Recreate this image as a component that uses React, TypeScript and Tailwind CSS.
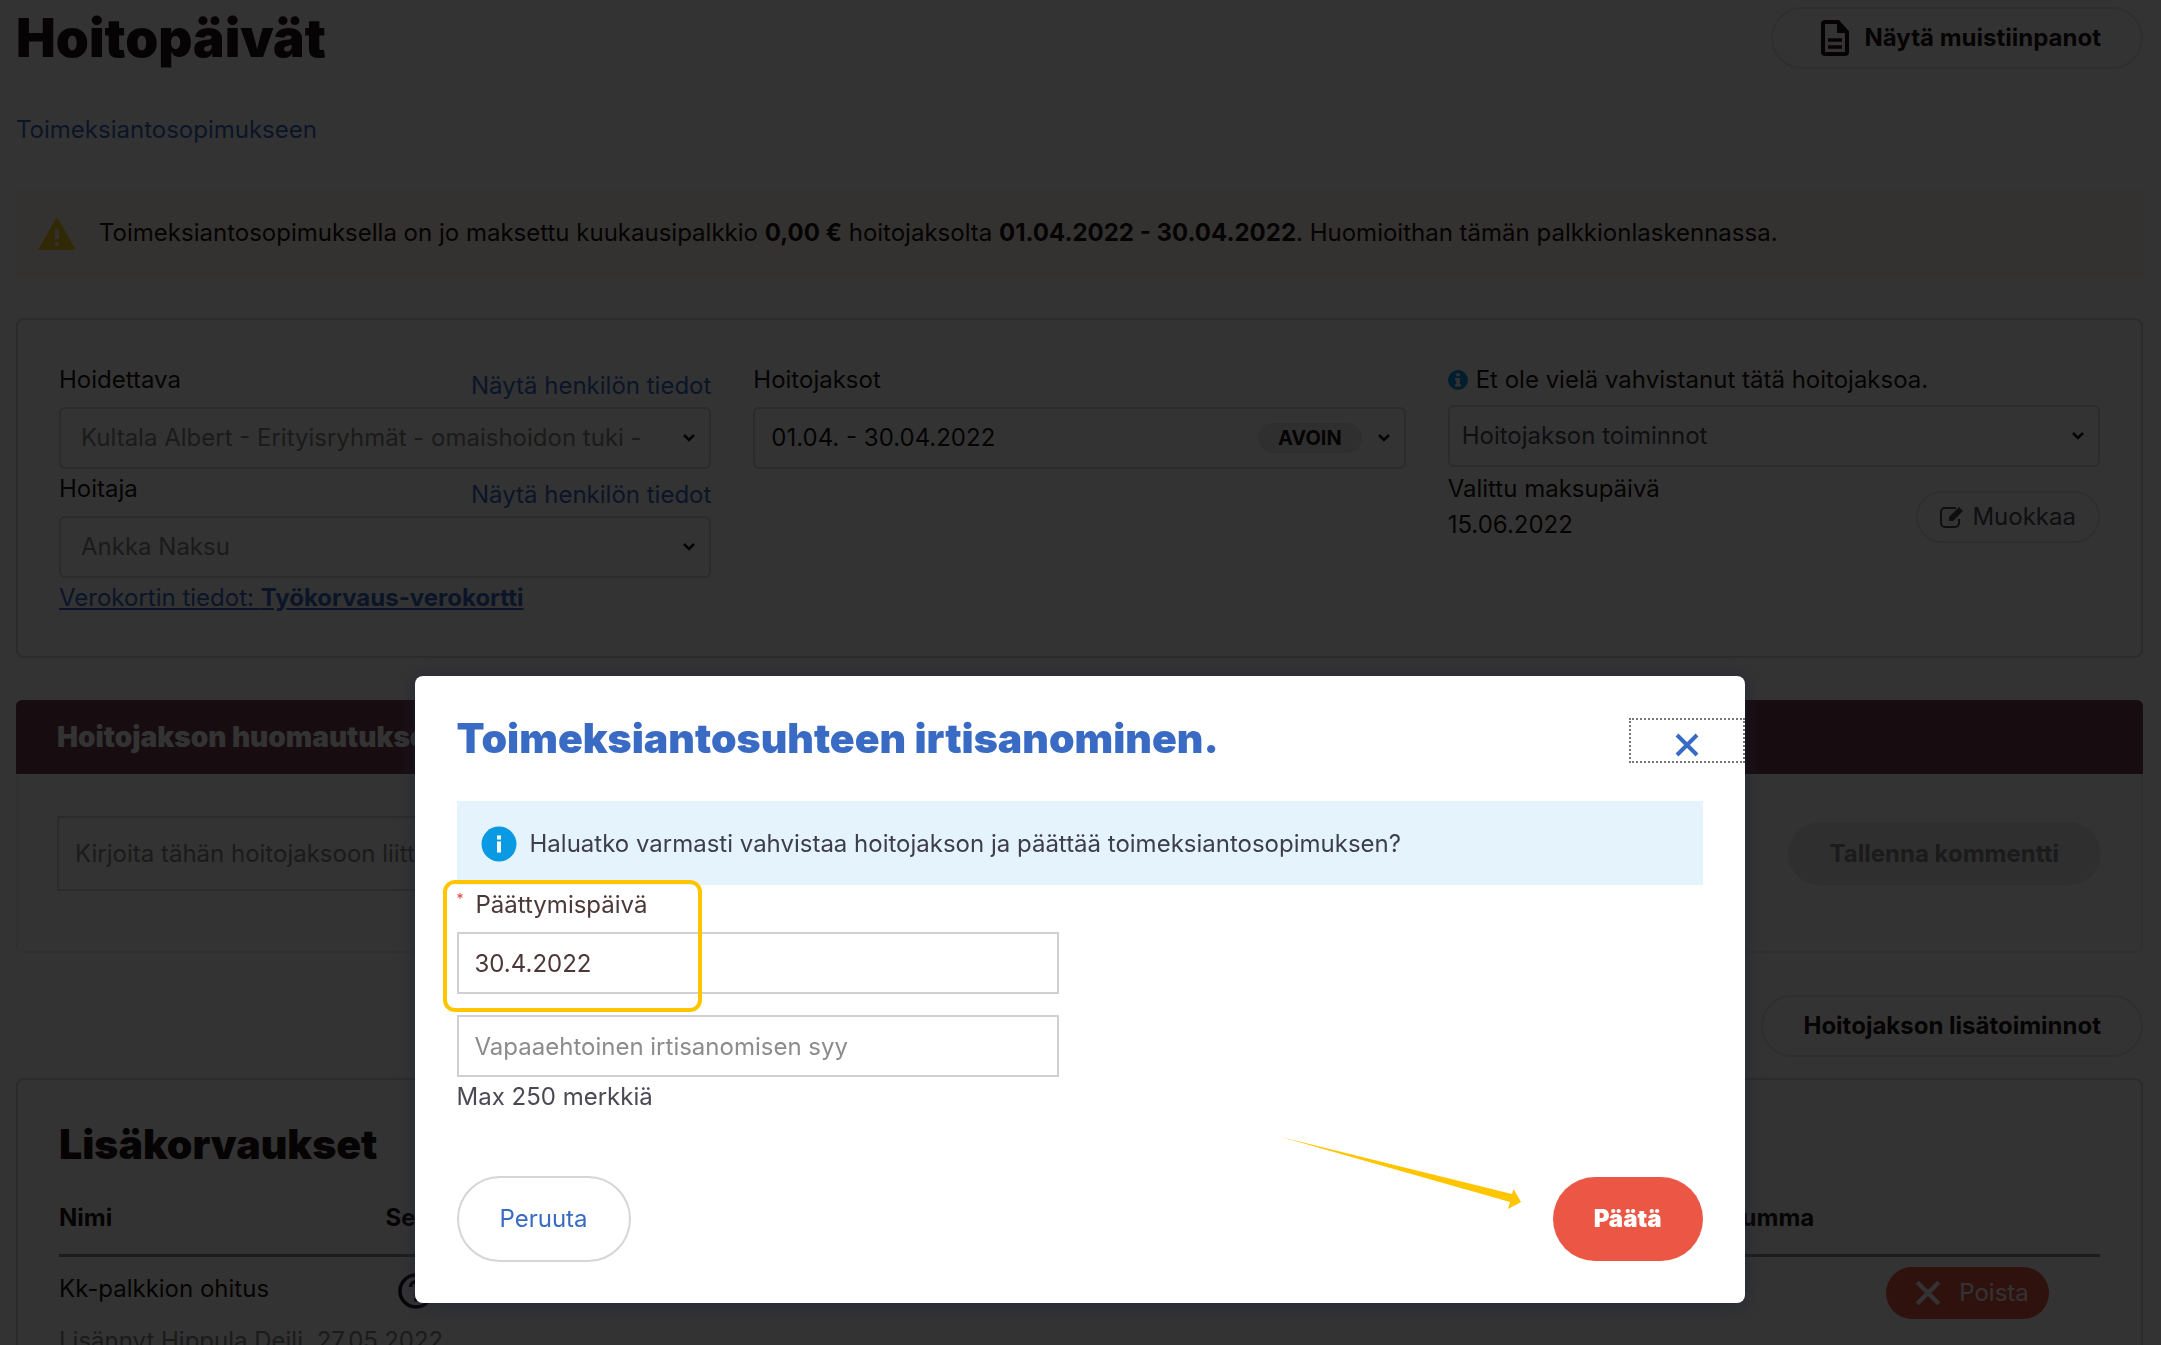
import { useState } from 'react';
import type { ReactNode } from 'react';

const cardClass = 'border-2 border-[#d6d6d6] rounded-lg bg-white';
const pillClass = 'flex items-center rounded-full border-2 border-[#e6e6e6] font-bold';

const Chevron = () => (
  <svg viewBox="0 0 12 8" className="w-3 h-2" fill="none" stroke="#1c1212" strokeWidth="2.6">
    <path d="M1 1l5 5 5-5" />
  </svg>
);

interface SelectBoxProps {
  id: string;
  label?: string;
  value: string;
  className?: string;
  badge?: string;
}

const SelectBox = ({ id, label, value, className = '', badge }: SelectBoxProps) => (
  <div className="relative">
    <select
      id={id}
      aria-label={label}
      className={`block w-full h-[62px] appearance-none rounded-md border-2 border-[#d6d6d6] bg-white pr-14 outline-none ${className}`}
    >
      <option>{value}</option>
    </select>
    <div className="absolute inset-y-0 right-4 flex items-center gap-4 pointer-events-none">
      {badge && (
        <span className="rounded-full bg-[#ececec] px-5 text-xl leading-[30px] font-bold">{badge}</span>
      )}
      <Chevron />
    </div>
  </div>
);

const LabelRow = ({ htmlFor, children }: { htmlFor: string; children: ReactNode }) => (
  <div className="flex items-start justify-between h-[43px]">
    <label htmlFor={htmlFor} className="leading-8">{children}</label>
    <a href="#henkilo" className="pt-1 leading-9 text-[#3a6bc4]">Näytä henkilön tiedot</a>
  </div>
);

const CloseIcon = ({ className }: { className: string }) => (
  <svg viewBox="0 0 24 24" className={className} fill="none" stroke="currentColor" strokeWidth="4">
    <path d="M2 2l20 20M22 2L2 22" />
  </svg>
);

const PageHeader = () => (
  <header>
    <div className="flex items-start justify-between">
      <h1 className="pt-2 text-[53px] leading-[60px] font-black">Hoitopäivät</h1>
      <button className={`${pillClass} mt-[7px] h-[62px] pl-12 pr-10 gap-4`}>
        <svg viewBox="0 0 28 36" className="w-7 h-9" fill="none" stroke="currentColor" strokeWidth="4">
          <path d="M4 2h13l9 10v20a2 2 0 0 1-2 2H4a2 2 0 0 1-2-2V4a2 2 0 0 1 2-2z" />
          <path d="M16 2v11h11z" fill="currentColor" stroke="none" />
          <path d="M7 20h14M7 27h14" strokeWidth="3.4" />
        </svg>
        Näytä muistiinpanot
      </button>
    </div>
    <a href="#sopimus" className="mt-[43px] block leading-9 text-[#3a6bc4]">Toimeksiantosopimukseen</a>
  </header>
);

const Warning = () => (
  <div className="mt-[41px] flex h-[88px] items-center bg-[#fdf8ee] pl-[22px] rounded-sm">
    <svg viewBox="0 0 38 33" className="w-[38px] h-[33px] mr-[23px]">
      <path d="M19 0l19 33H0z" fill="#f2cc1c" />
      <path d="M17 12h4v10h-4zM17 25h4v4h-4z" fill="#fdf6e8" />
    </svg>
    <p>
      Toimeksiantosopimuksella on jo maksettu kuukausipalkkio <b className="font-bold">0,00 €</b> hoitojaksolta{' '}
      <b className="font-bold">01.04.2022 - 30.04.2022</b>. Huomioithan tämän palkkionlaskennassa.
    </p>
  </div>
);

const Details = () => (
  <section className={`${cardClass} mt-[41px] grid h-[340px] grid-cols-3 gap-[42px] px-[41px] pt-11`}>
    <div>
      <LabelRow htmlFor="hoidettava">Hoidettava</LabelRow>
      <SelectBox id="hoidettava" value="Kultala Albert - Erityisryhmät - omaishoidon tuki -" className="pl-5 text-[#858585]" />
      <div className="pt-1">
        <LabelRow htmlFor="hoitaja">Hoitaja</LabelRow>
      </div>
      <SelectBox id="hoitaja" value="Ankka Naksu" className="pl-5 text-[#858585]" />
      <a href="#verokortti" className="inline-block leading-10 text-[#3a6bc4] underline">
        Verokortin tiedot: <b className="font-bold">Työkorvaus-verokortti</b>
      </a>
    </div>
    <div>
      <label htmlFor="jaksot" className="block h-[43px] leading-8">Hoitojaksot</label>
      <SelectBox id="jaksot" value="01.04. - 30.04.2022" className="pl-4" badge="AVOIN" />
    </div>
    <div>
      <p className="flex h-[41px] items-start gap-2 leading-8">
        <svg viewBox="0 0 20 20" className="mt-[6px] w-5 h-5">
          <circle cx="10" cy="10" r="10" fill="#0a91d6" />
          <path d="M8.2 3.2h3.6v3H8.2zM7 8h4.8v6.2H13v2.2H7v-2.2h1.3v-4H7z" fill="#fff" />
        </svg>
        Et ole vielä vahvistanut tätä hoitojaksoa.
      </p>
      <SelectBox id="toiminnot" label="Hoitojakson toiminnot" value="Hoitojakson toiminnot" className="pl-3 text-[#4a4a55]" />
      <div className="flex justify-between pt-1">
        <div className="leading-9">
          <p>Valittu maksupäivä</p>
          <p>15.06.2022</p>
        </div>
        <button className="mt-5 flex h-[52px] items-center gap-2 rounded-full border-2 border-[#e6e6e6] px-[22px] text-[#4a4a55]">
          <svg viewBox="0 0 24 22" className="w-6 h-[22px]" fill="none" stroke="currentColor" strokeWidth="2">
            <path d="M16 2H5a4 4 0 0 0-4 4v11a4 4 0 0 0 4 4h10a4 4 0 0 0 4-4v-4" />
            <path d="M9 11L19 1l4 4-10 10H9z" fill="currentColor" stroke="none" />
          </svg>
          Muokkaa
        </button>
      </div>
    </div>
  </section>
);

const Comments = () => (
  <section className="mt-[42px] overflow-hidden rounded-md">
    <h2 className="bg-[#733c50] pl-[41px] text-[28px] leading-[74px] font-black text-white">
      Hoitojakson huomautukset
    </h2>
    <div className="flex h-[179px] items-start gap-20 rounded-b-md border-2 border-t-0 border-[#eeeeee] pl-[39px] pr-10 pt-[42px]">
      <input
        aria-label="Kommentti"
        placeholder="Kirjoita tähän hoitojaksoon liittyvä kommentti"
        className="h-[75px] flex-1 border-2 border-[#d6d6d6] px-4 outline-none placeholder:text-[#858585]"
      />
      <button className="mt-[6px] h-[63px] rounded-full bg-[#ececec] px-[42px] font-bold text-[#858585]">
        Tallenna kommentti
      </button>
    </div>
  </section>
);

const Compensations = () => (
  <section className={`${cardClass} mt-[21px] min-h-[340px] px-[41px] pt-[34px]`}>
    <h2 className="text-[41px] leading-[60px] font-black">Lisäkorvaukset</h2>
    <table className="mt-2 w-full text-left">
      <thead>
        <tr className="h-[73px] border-b-[3px] border-[#8a8a8a]">
          <th className="w-[16%] font-bold">Nimi</th>
          <th className="w-[30%] font-bold">Selite</th>
          <th className="w-[40%] text-right font-bold">Summa</th>
          <th className="w-[14%]" />
        </tr>
      </thead>
      <tbody>
        <tr className="h-[70px]">
          <td className="pb-1">Kk-palkkion ohitus</td>
          <td className="pl-3">
            <svg viewBox="0 0 36 36" className="w-9 h-9" fill="none" stroke="currentColor" strokeWidth="3.5">
              <circle cx="18" cy="18" r="16" />
              <path d="M12.500 14a5.500 5.500 0 1 1 8 5c-1.800 1-2.500 1.600-2.500 3.500M18 25v3.500" />
            </svg>
          </td>
          <td />
          <td className="pl-[72px] pt-1">
            <button className="flex h-[52px] items-center gap-[18px] rounded-full bg-[#ec5745] pl-[29px] pr-5 text-white">
              <CloseIcon className="w-[26px] h-[26px]" />
              Poista
            </button>
          </td>
        </tr>
        <tr>
          <td colSpan={4} className="text-[#858585]">Lisännyt Hippula Deili, 27.05.2022</td>
        </tr>
      </tbody>
    </table>
  </section>
);

const TerminationModal = ({ onClose }: { onClose: () => void }) => (
  <div className="fixed inset-0 z-50 flex items-end justify-center bg-black/80 pb-[42px] pr-[2px]">
    <div
      role="dialog"
      aria-labelledby="modal-title"
      className="relative w-full max-w-[1330px] rounded-lg bg-white px-[42px] pt-[30px] pb-[41px] shadow-[0_2px_20px_rgba(30,34,56,0.6)]"
    >
      <div className="-mr-[42px] flex items-start justify-between">
        <h2 id="modal-title" className="text-[41px] leading-[64px] font-black text-[#3a6bc4]">
          Toimeksiantosuhteen irtisanominen.
        </h2>
        <button
          aria-label="Sulje"
          onClick={onClose}
          className="mt-3 flex h-[45px] w-[116px] items-end justify-center border-2 border-dotted border-[#777] pb-1 text-[#3a6bc4]"
        >
          <CloseIcon className="w-6 h-6" />
        </button>
      </div>

      <div className="mt-[31px] flex h-[84px] items-center gap-[13px] bg-[#e5f4fc] pl-6 pt-[2px] text-[#3d3d4d]">
        <svg viewBox="0 0 36 36" className="w-9 h-9">
          <circle cx="18" cy="18" r="17.500" fill="#0a9ae3" />
          <path d="M16 9.500h4v4h-4zM16 15.500h4v11h-4z" fill="#fff" />
        </svg>
        Haluatko varmasti vahvistaa hoitojakson ja päättää toimeksiantosopimuksen?
      </div>

      <div className="relative flex h-[47px] text-[#4d3838]">
        <span className="w-[19px] pt-1 text-sm text-[#e53935]">*</span>
        <label htmlFor="paiva" className="leading-10">Päättymispäivä</label>
        {/* Korostus päivämäärän ympärillä */}
        <div className="absolute -left-[14px] -top-[5px] h-[132px] w-[259px] rounded-xl border-4 border-[#ffc600] pointer-events-none" />
      </div>
      <input
        id="paiva"
        defaultValue="30.4.2022"
        className="block h-[62px] w-[602px] border-2 border-[#d0d0d0] px-4 text-[#4d3838] outline-none"
      />
      <input
        id="syy"
        aria-label="Vapaaehtoinen irtisanomisen syy"
        placeholder="Vapaaehtoinen irtisanomisen syy"
        className="mt-[21px] block h-[62px] w-[602px] border-2 border-[#d0d0d0] px-4 outline-none placeholder:text-[#8c8c8c]"
      />
      <p className="leading-10 text-[#4a4a55]">Max 250 merkkiä</p>

      <div className="mt-[59px] flex items-center justify-between">
        <button onClick={onClose} className="h-[86px] rounded-full border-2 border-[#d6d6d6] px-[41px] text-[#3a6bc4]">
          Peruuta
        </button>
        <button className="h-[84px] rounded-full bg-[#ec5745] px-[41px] font-black text-white">Päätä</button>
      </div>

      <svg viewBox="0 0 242 74" className="absolute right-[223px] bottom-[92px] w-[242px] h-[74px] pointer-events-none" fill="#ffc600">
        <path d="M1 0L232 57L233.500 52L241 65L228 72L230 65z" />
      </svg>
    </div>
  </div>
);

export default function App() {
  const [open, setOpen] = useState(true);

  return (
    <div className="h-screen overflow-hidden bg-white pl-4 pr-[18px] font-['Inter',sans-serif] text-2xl text-[#1c1212]">
      <PageHeader />
      <Warning />
      <Details />
      <Comments />
      <div className="mt-[42px] flex justify-end">
        <button onClick={() => setOpen(true)} className={`${pillClass} h-[62px] px-10`}>
          Hoitojakson lisätoiminnot
        </button>
      </div>
      <Compensations />
      {open && <TerminationModal onClose={() => setOpen(false)} />}
    </div>
  );
}
